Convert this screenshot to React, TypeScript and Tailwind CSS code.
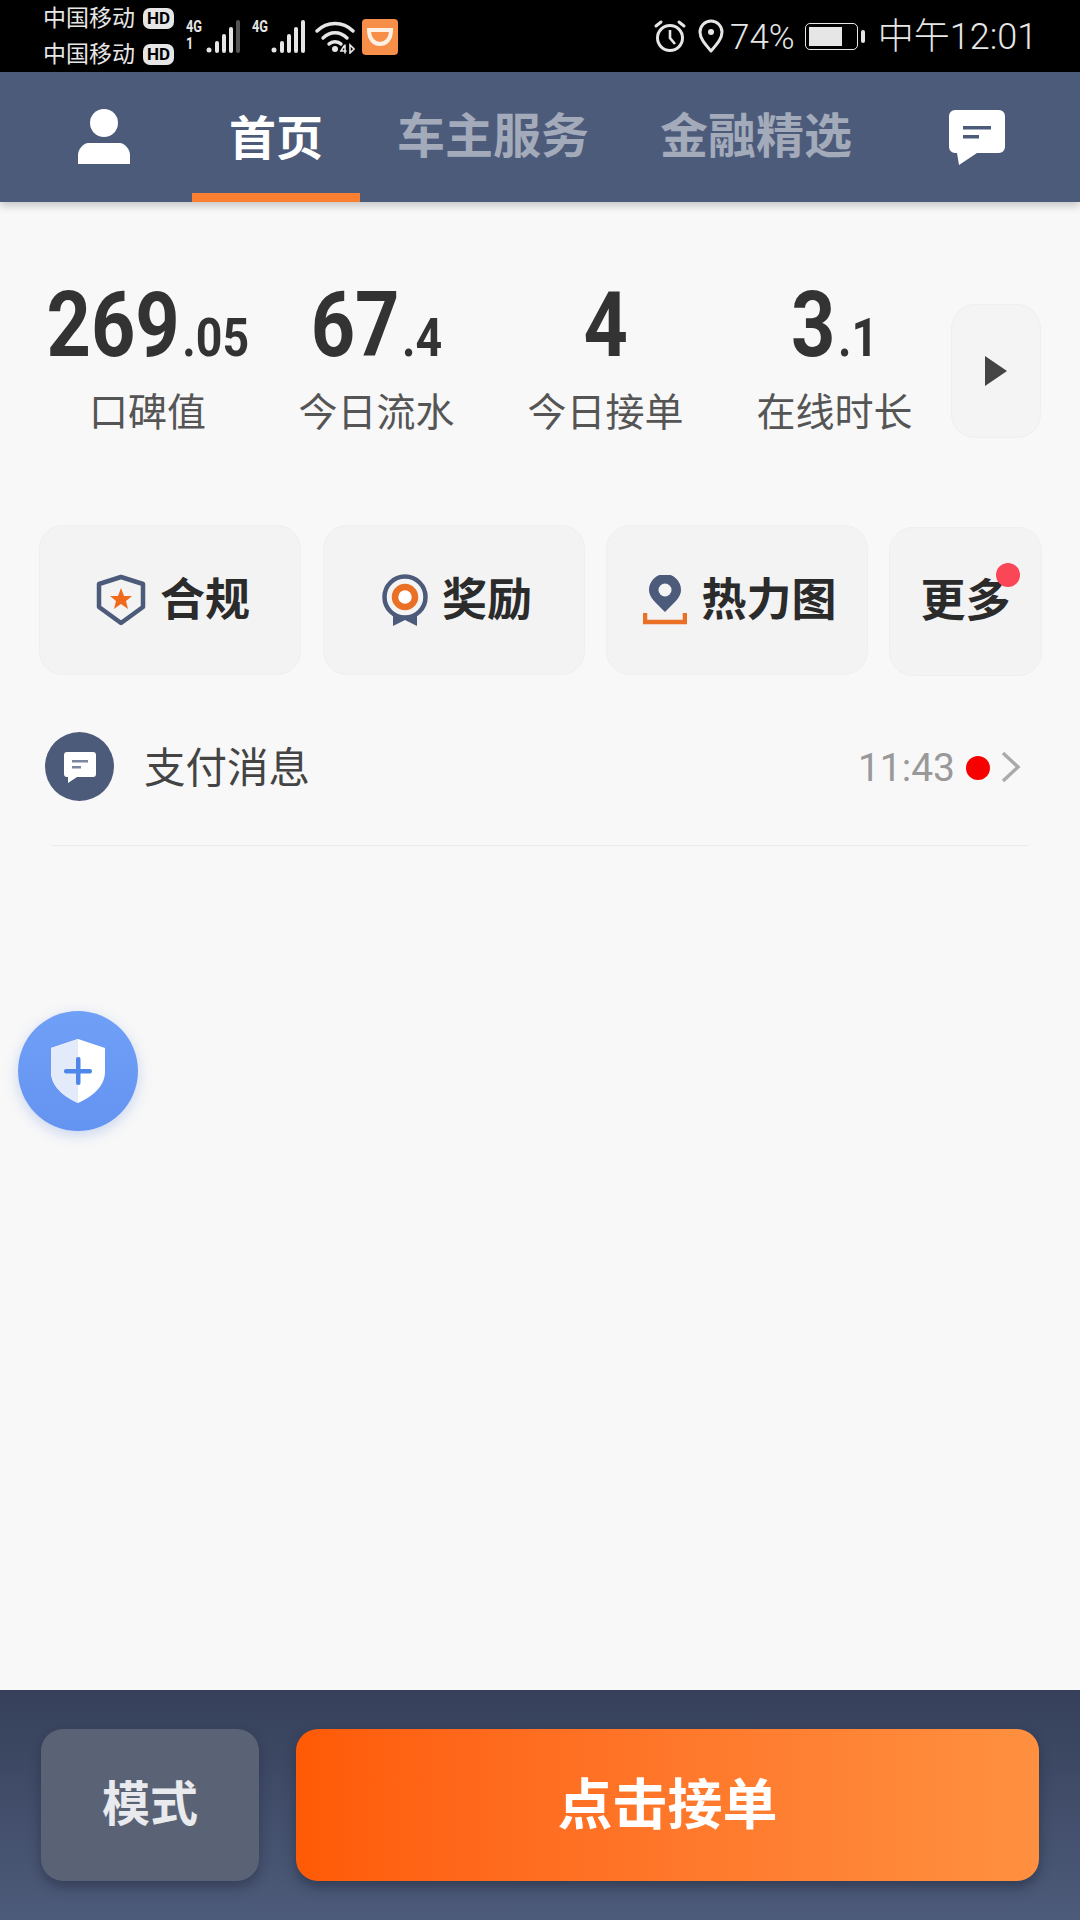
const cjk = "font-['Roboto','Noto_Sans_CJK_SC',sans-serif]";

function HdBadge() {
  return (
    <span className="ml-[8px] flex h-[21px] w-[31px] items-center justify-center rounded-[7px] bg-[#e6e6e6] text-[17px] leading-none font-bold text-black">
      HD
    </span>
  );
}

function Signal({ dim }: { dim?: boolean }) {
  return (
    <svg width="35" height="34" viewBox="0 0 35 34">
      <circle cx="3" cy="30" r="2.5" fill="#e6e6e6" />
      <rect x="9" y="21" width="4" height="12" rx="2" fill="#e6e6e6" />
      <rect x="16" y="14" width="4" height="19" rx="2" fill="#e6e6e6" />
      <rect x="23" y="7" width="4" height="26" rx="2" fill="#e6e6e6" />
      <rect x="30" y="0" width="4" height="33" rx="2" fill={dim ? "#555" : "#e6e6e6"} />
    </svg>
  );
}

function StatusBar() {
  return (
    <div className={`flex h-[72px] shrink-0 items-center bg-black text-[#e6e6e6] ${cjk}`}>
      <div className="ml-[43px] flex w-[132px] flex-col gap-[16px]">
        <div className="flex h-[20px] items-center text-[23px] leading-none">
          中国移动
          <HdBadge />
        </div>
        <div className="flex h-[20px] items-center text-[23px] leading-none">
          中国移动
          <HdBadge />
        </div>
      </div>
      {/* sim 1 */}
      <div className="ml-[11px] flex w-[19px] origin-left scale-x-[0.8] flex-col self-start pt-[18px] text-[16px] leading-[17px] font-bold">
        <span>4G</span>
        <span>1</span>
      </div>
      <div className="mt-[2px] ml-[1px]">
        <Signal dim />
      </div>
      {/* sim 2 */}
      <div className="ml-[11px] flex w-[19px] origin-left scale-x-[0.8] flex-col self-start pt-[18px] text-[16px] leading-[17px] font-bold">
        <span>4G</span>
      </div>
      <div className="mt-[2px]">
        <Signal />
      </div>
      <svg className="mt-[2px] ml-[9px]" width="40" height="34" viewBox="0 0 40 34" fill="none" stroke="#e6e6e6" strokeWidth="3.4" strokeLinecap="round">
        <path d="M2 11C12 1 28 1 38 11" />
        <path d="M8 18C15 11 25 11 32 18" />
        <path d="M14 24C17 21 23 21 26 24" />
        <circle cx="20" cy="29" r="3" fill="#e6e6e6" stroke="none" />
        <path d="M29 26l-3 5h5M30 25v8M35 25v8l4-4z" strokeWidth="1.6" />
      </svg>
      <div className="mt-[1px] ml-[7px] flex h-[36px] w-[36px] items-center justify-center rounded-[4px] bg-[#f78f49]">
        <svg width="26" height="20" viewBox="0 0 26 20" fill="none" stroke="#fdf1e6" strokeWidth="4">
          <path d="M2 3H24C24 12 19 17 13 17C7 17 2 12 2 3Z" />
        </svg>
      </div>
      {/* right side */}
      <svg className="ml-[255px]" width="34" height="34" viewBox="0 0 34 34" fill="none" stroke="#e6e6e6" strokeWidth="3">
        <circle cx="17" cy="19" r="12.5" />
        <path d="M17 11v8l5 6" strokeWidth="2.6" />
        <path d="M3 7l5-4M31 7l-5-4" strokeLinecap="round" />
      </svg>
      <svg className="ml-[11px]" width="26" height="34" viewBox="0 0 26 34" fill="none" stroke="#e6e6e6" strokeWidth="3">
        <path d="M13 32C6 24 2 19 2 13A11 11 0 0 1 24 13C24 19 20 24 13 32Z" strokeLinejoin="round" />
        <circle cx="13" cy="13" r="3" fill="#e6e6e6" stroke="none" />
      </svg>
      <span className="mt-[2px] ml-[6px] text-[35px] leading-none font-light">74%</span>
      <div className="ml-[10px] flex h-[27px] w-[53px] items-center rounded-[5px] border-[1.5px] border-[#e6e6e6] p-[3px]">
        <div className="h-full w-[74%] bg-[#e6e6e6]" />
      </div>
      <div className="ml-[3px] h-[13px] w-[4px] rounded-[2px] bg-[#e6e6e6]" />
      <span className="mt-[2px] ml-[13px] text-[36px] leading-none font-light whitespace-nowrap">中午12:01</span>
    </div>
  );
}

function NavBar() {
  return (
    <div className={`relative z-10 flex h-[130px] shrink-0 items-center bg-[#4d5b7a] shadow-[0_4px_8px_rgba(0,0,0,0.2)] ${cjk}`}>
      <svg className="ml-[78px]" width="52" height="56" viewBox="0 0 52 56" fill="#fff">
        <circle cx="26" cy="14" r="14" />
        <path d="M10 34H42C46 34 52 40 52 46V55H0V46C0 40 6 34 10 34Z" />
      </svg>
      <div className="ml-[62px] flex h-full w-[168px] flex-col items-center justify-between">
        <span className="pt-[37px] text-[47px] leading-[60px] font-bold text-white">首页</span>
        <div className="h-[9px] w-full bg-[#fb7f31]" />
      </div>
      <span className="ml-[37px] text-[48px] leading-none font-bold whitespace-nowrap text-[#a3aaba]">车主服务</span>
      <span className="ml-[71px] text-[48px] leading-none font-bold whitespace-nowrap text-[#a3aaba]">金融精选</span>
      <svg className="mt-[2px] ml-[97px]" width="56" height="56" viewBox="0 0 56 56">
        <path d="M6 0H50A6 6 0 0 1 56 6V37A6 6 0 0 1 50 43H28L10 55L8 43H6A6 6 0 0 1 0 37V6A6 6 0 0 1 6 0Z" fill="#fff" />
        <rect x="14" y="16" width="28" height="3.5" fill="#4d5b7a" />
        <rect x="14" y="25" width="16" height="3.5" fill="#4d5b7a" />
      </svg>
    </div>
  );
}

const stats = [
  { big: "269", small: ".05", label: "口碑值" },
  { big: "67", small: ".4", label: "今日流水" },
  { big: "4", small: "", label: "今日接单" },
  { big: "3", small: ".1", label: "在线时长" },
];

function StatsRow() {
  return (
    <div className={`mt-[84px] ml-[33px] flex items-start ${cjk}`}>
      {stats.map((s) => (
        <div key={s.label} className="flex w-[229px] flex-col items-center">
          <div className="flex h-[80px] scale-x-[0.86] items-baseline font-bold text-[#333333]">
            <span className="text-[90px] leading-[80px]">{s.big}</span>
            {s.small && <span className="ml-[3px] text-[54px] leading-[80px]">{s.small}</span>}
          </div>
          <span className="mt-[25px] text-[39px] leading-[44px] whitespace-nowrap text-[#555555]">{s.label}</span>
        </div>
      ))}
      <div className="mt-[18px] ml-[2px] flex h-[134px] w-[90px] items-center justify-center rounded-[24px] border border-[#efefef] bg-[#f4f4f4]">
        <svg width="22" height="30" viewBox="0 0 22 30" fill="#444444">
          <path d="M0 0L22 15L0 30Z" />
        </svg>
      </div>
    </div>
  );
}

function ShieldIcon() {
  return (
    <svg width="50" height="52" viewBox="0 0 50 52">
      <path d="M25 3L47 10V33L25 49L3 33V10Z" fill="none" stroke="#4d5b7a" strokeWidth="4.5" strokeLinejoin="round" />
      <path d="M25 14L28 22H36L30 27L32 35L25 30L18 35L20 27L14 22H22Z" fill="#f06a1c" />
    </svg>
  );
}

function MedalIcon() {
  return (
    <svg width="46" height="52" viewBox="0 0 46 52">
      <path d="M11 36V52L23 46L35 52V36Z" fill="#4d5b7a" />
      <circle cx="23" cy="23" r="20.5" fill="#f4f4f4" stroke="#4d5b7a" strokeWidth="4.5" />
      <circle cx="23" cy="23" r="10" fill="#fff" stroke="#ea7025" strokeWidth="6.5" />
    </svg>
  );
}

function HeatIcon() {
  return (
    <svg width="44" height="50" viewBox="0 0 44 50">
      <path d="M22 37C12 27 6 22 6 15A16 16 0 0 1 38 15C38 22 32 27 22 37Z" fill="#4d5b7a" />
      <circle cx="22" cy="15" r="6.5" fill="#f4f4f4" />
      <path d="M2 38V47H42V38" fill="none" stroke="#ea7025" strokeWidth="4.5" />
    </svg>
  );
}

function ActionCards() {
  const card = "flex h-[150px] w-[262px] items-center justify-center gap-[14px] rounded-[24px] border border-[#efefef] bg-[#f3f3f4] pl-[6px]";
  const label = "text-[45px] leading-none font-bold text-[#2b2b2b]";
  return (
    <div className={`mt-[87px] ml-[39px] flex ${cjk}`}>
      <div className={card}>
        <ShieldIcon />
        <span className={label}>合规</span>
      </div>
      <div className={`${card} ml-[22px]`}>
        <MedalIcon />
        <span className={label}>奖励</span>
      </div>
      <div className={`${card} ml-[21px] w-[261px]`}>
        <HeatIcon />
        <span className={label}>热力图</span>
      </div>
      <div className="relative mt-[2px] ml-[21px] flex h-[149px] w-[153px] items-center justify-center rounded-[24px] border border-[#efefef] bg-[#f3f3f4]">
        <span className={label}>更多</span>
        <div className="absolute top-[35px] right-[21px] h-[24px] w-[24px] rounded-full bg-[#fb4658]" />
      </div>
    </div>
  );
}

function MessageRow() {
  return (
    <div className={`mx-[51px] mt-[47px] flex h-[123px] items-start border-b border-[#ececec] ${cjk}`}>
      <div className="mt-[9px] -ml-[6px] flex h-[69px] w-[69px] items-center justify-center rounded-full bg-[#4d5b7a]">
        <svg width="34" height="34" viewBox="0 0 34 34">
          <path d="M4 2H30A3 3 0 0 1 33 5V24A3 3 0 0 1 30 27H14L5 33V27H4A3 3 0 0 1 1 24V5A3 3 0 0 1 4 2Z" fill="#fff" />
          <rect x="9" y="10" width="16" height="2.5" fill="#7d86a0" />
          <rect x="9" y="16" width="9" height="2.5" fill="#7d86a0" />
        </svg>
      </div>
      <span className="mt-[21px] ml-[30px] text-[41.5px] leading-[50px] text-[#444444]">支付消息</span>
      <span className="mt-[23px] ml-auto text-[39px] leading-[44px] font-normal text-[#999999]">11:43</span>
      <div className="mt-[33px] ml-[11px] h-[24px] w-[24px] rounded-full bg-[#f60000]" />
      <svg className="mt-[28px] ml-[11px] mr-[8px]" width="20" height="32" viewBox="0 0 20 32" fill="none" stroke="#aaaaaa" strokeWidth="3.4">
        <path d="M2 2L17 16L2 30" />
      </svg>
    </div>
  );
}

function BottomBar() {
  return (
    <div className={`flex h-[230px] shrink-0 bg-gradient-to-b from-[#36405a] to-[#4d5b7a] pt-[39px] ${cjk}`}>
      <div className="ml-[41px] flex h-[152px] w-[218px] items-center justify-center rounded-[22px] bg-[#5a6275] text-[48px] font-bold text-[#e9eaee] shadow-[0_6px_12px_rgba(30,36,54,0.45)]">
        模式
      </div>
      <div className="ml-[37px] flex h-[152px] w-[743px] items-center justify-center rounded-[22px] bg-gradient-to-r from-[#ff5a05] to-[#ff9040] text-[55px] font-bold text-white shadow-[0_6px_12px_rgba(30,36,54,0.5)]">
        点击接单
      </div>
    </div>
  );
}

export default function App() {
  return (
    <div className="flex h-[1920px] w-[1080px] flex-col overflow-hidden bg-[#f8f8f8]">
      <StatusBar />
      <NavBar />
      <div className="relative flex-1">
        <StatsRow />
        <ActionCards />
        <MessageRow />
        {/* floating safety button */}
        <div className="absolute top-[809px] left-[18px] flex h-[120px] w-[120px] items-center justify-center rounded-full bg-gradient-to-b from-[#6f9ff6] to-[#6494f1] shadow-[0_4px_14px_rgba(90,130,220,0.3)]">
          <svg width="56" height="66" viewBox="0 0 56 66">
            <path d="M28 1L55 10V34C55 48 42 59 28 65C14 59 1 48 1 34V10Z" fill="#ffffff" />
            <path d="M28 1L1 10V34C1 48 14 59 28 65Z" fill="#e3ebfb" />
            <rect x="26" y="19" width="4.5" height="28" rx="2" fill="#4f86ea" />
            <rect x="14" y="31" width="28" height="4.5" rx="2" fill="#4f86ea" />
          </svg>
        </div>
      </div>
      <BottomBar />
    </div>
  );
}
